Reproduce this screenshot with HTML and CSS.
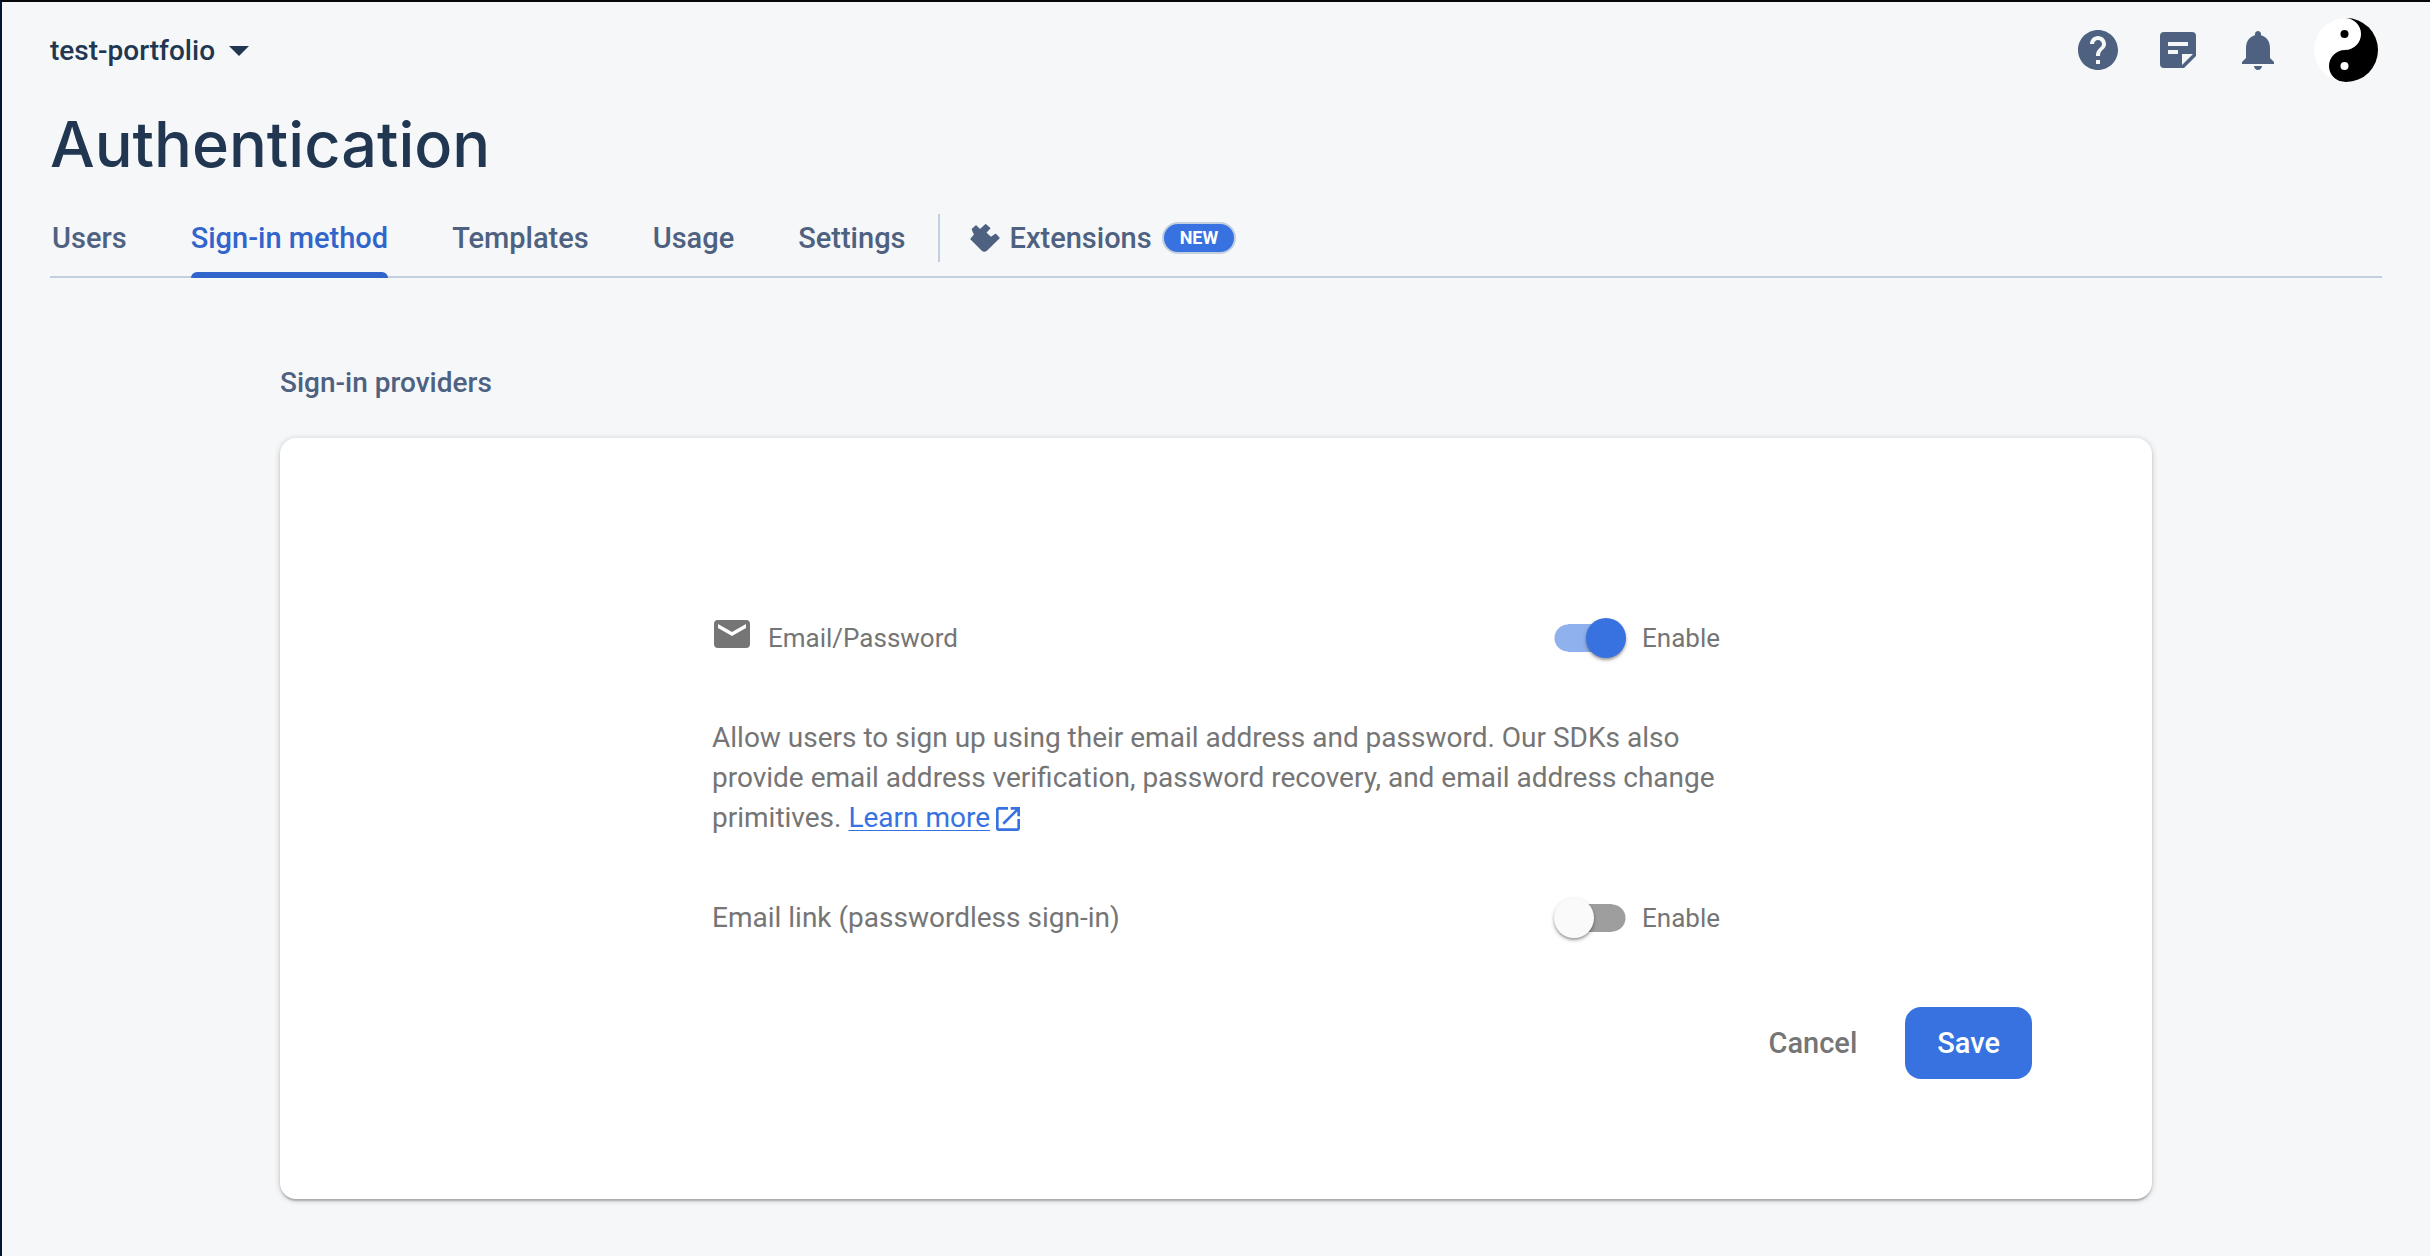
FILE: index.html
```html
<!DOCTYPE html>
<html lang="en">
<head>
<meta charset="utf-8">
<meta name="viewport" content="width=device-width, initial-scale=1">
<title>Authentication</title>
<link rel="stylesheet" href="styles.css">
</head>
<body>
<header class="header">
  <div class="topbar">
    <button type="button" class="project">test-portfolio
      <svg class="project-arrow" viewBox="0 0 20 10" aria-hidden="true"><path d="M0 0h20L10 10z"/></svg>
    </button>
    <div class="actions">
      <button type="button" class="icon-button" aria-label="Help">
        <svg class="icon" viewBox="0 0 24 24"><path d="M12 2C6.48 2 2 6.48 2 12s4.48 10 10 10 10-4.480 10-10S17.520 2 12 2zm1 17h-2v-2h2v2zm2.070-7.750l-.9.920C13.450 12.900 13 13.500 13 15h-2v-.5c0-1.100.450-2.100 1.170-2.830l1.240-1.260c.370-.36.590-.86.590-1.410 0-1.100-.9-2-2-2s-2 .9-2 2H8c0-2.210 1.790-4 4-4s4 1.790 4 4c0 .880-.36 1.680-.930 2.250z"/></svg>
      </button>
      <button type="button" class="icon-button" aria-label="Release notes">
        <svg class="icon" viewBox="0 0 24 24"><path fill-rule="evenodd" d="M5 3h14a2 2 0 0 1 2 2v10l-6 6H5a2 2 0 0 1-2-2V5a2 2 0 0 1 2-2zM7 8v2h10V8zM7 12v2h5v-2zM14 14v5.500L19.500 14z"/></svg>
      </button>
      <button type="button" class="icon-button" aria-label="Notifications">
        <svg class="icon" viewBox="0 0 24 24"><path d="M12 22c1.100 0 2-.9 2-2h-4c0 1.100.9 2 2 2zm6-6v-5c0-3.070-1.630-5.640-4.500-6.320V4c0-.830-.670-1.500-1.500-1.500s-1.500.670-1.500 1.500v.680C7.640 5.360 6 7.920 6 11v5l-2 2v1h16v-1l-2-2z"/></svg>
      </button>
      <button type="button" class="avatar" aria-label="Account">
        <svg class="avatar-art" viewBox="0 0 64 64"><circle cx="32" cy="32" r="32" fill="#fff"/><path d="M31 0A16 16 0 0 1 31 32A16 16 0 0 0 31 64H64V0z"/><circle cx="30.500" cy="16" r="4"/><circle cx="30.500" cy="48" r="4" fill="#fff"/></svg>
      </button>
    </div>
  </div>
  <h1 class="title">Authentication</h1>
  <nav class="tabs" aria-label="Authentication sections">
    <a class="tab" href="#users">Users</a>
    <a class="tab tab-active" href="#sign-in" aria-current="page">Sign-in method</a>
    <a class="tab" href="#templates">Templates</a>
    <a class="tab" href="#usage">Usage</a>
    <a class="tab" href="#settings">Settings</a>
    <a class="tab tab-extensions" href="#extensions">
      <svg class="extension-icon" viewBox="121 56 90 88" aria-hidden="true"><path d="M128 74l11-10 10 10h4l15-14 12 11-12 13 16 15 14-10 10 11-37 36q-7 6-14 0l-33-33 11-13z"/></svg>
      Extensions
      <span class="badge">NEW</span>
    </a>
  </nav>
</header>
<main class="main">
  <h2 class="section-title">Sign-in providers</h2>
  <form class="card">
    <div class="provider">
      <div class="row">
        <div class="provider-name">
          <svg class="mail-icon" viewBox="0 0 36 28" aria-hidden="true"><rect width="36" height="28" rx="4"/><path d="M4 4l14 8 14-8v4l-14 8-14-8z" fill="#fff"/></svg>
          Email/Password
        </div>
        <label class="toggle"><input class="switch" type="checkbox" checked>Enable</label>
      </div>
      <p class="description">Allow users to sign up using their email address and password. Our SDKs also provide email address verification, password recovery, and email address change primitives. <a class="link" href="#learn-more">Learn more</a><svg class="link-icon" viewBox="0 0 24 24" aria-hidden="true"><path d="M19 19H5V5h7V3H5a2 2 0 0 0-2 2v14a2 2 0 0 0 2 2h14c1.100 0 2-.9 2-2v-7h-2v7zM14 3v2h3.590l-9.830 9.830 1.410 1.410L19 6.410V10h2V3h-7z"/></svg></p>
      <div class="row">
        <div class="option-name">Email link (passwordless sign-in)</div>
        <label class="toggle"><input class="switch" type="checkbox">Enable</label>
      </div>
    </div>
    <div class="buttons">
      <button type="button" class="button">Cancel</button>
      <button type="submit" class="button button-primary">Save</button>
    </div>
  </form>
</main>
</body>
</html>
```
FILE: styles.css
```css
* {
  box-sizing: border-box;
}

body {
  margin: 0;
  min-height: 100vh;
  border-top: 2px solid #08080c;
  border-left: 2px solid #041730;
  background: #f6f7f9;
  color: #757575;
  font: 28px/40px Roboto, sans-serif;
}

button {
  border: 0;
  padding: 0;
  background: none;
  font: inherit;
  cursor: pointer;
}

svg {
  display: block;
}

.header {
  padding: 0 48px;
  color: #4e6180;
}

.topbar {
  display: flex;
  align-items: center;
  justify-content: space-between;
  height: 96px;
}

.project {
  display: flex;
  align-items: center;
  gap: 14px;
  padding-top: 2px;
  color: #213751;
  font-weight: 500;
}

.project-arrow {
  width: 20px;
  height: 10px;
  fill: #213751;
}

.actions {
  display: flex;
  align-items: center;
  gap: 32px;
  padding-right: 4px;
}

.icon {
  width: 48px;
  height: 48px;
  fill: #4e6180;
}

.avatar-art {
  width: 64px;
  height: 64px;
  border-radius: 50%;
}

.title {
  margin: 0 0 8px;
  color: #213751;
  font: 500 63px/92px Inter, sans-serif;
}

.tabs {
  display: flex;
  gap: 64px;
  height: 80px;
  padding-left: 2px;
  border-bottom: 2px solid #c3cfdf;
}

.tab {
  display: flex;
  align-items: center;
  margin-bottom: -2px;
  padding-top: 2px;
  border-bottom: 2px solid transparent;
  color: #4e6180;
  font-size: 29px;
  font-weight: 500;
  text-decoration: none;
}

.tab-active {
  position: relative;
  color: #3265cb;
}

.tab-active::after {
  content: "";
  position: absolute;
  right: 0;
  bottom: -2px;
  left: 0;
  height: 6px;
  border-radius: 6px 6px 0 0;
  background: #3265cb;
}

.tab-extensions {
  gap: 10px;
  margin-left: -32px;
}

.tab-extensions::before {
  content: "";
  width: 2px;
  height: 48px;
  margin-right: 20px;
  background: #c3cfdf;
}

.extension-icon {
  width: 30px;
  height: 30px;
  fill: #4e6180;
  stroke: #4e6180;
  stroke-width: 4;
  stroke-linejoin: round;
}

.badge {
  padding: 0 16px;
  border: 2px solid #c3cfdf;
  border-radius: 16px;
  background: #3872e0;
  color: #fff;
  font-size: 18px;
  font-weight: 700;
  line-height: 28px;
}

.main {
  max-width: 1872px;
  margin: 0 auto;
  padding: 85px 0 56px;
}

.section-title {
  margin: 0 0 35px;
  color: #4e6180;
  font-size: 28px;
  font-weight: 500;
}

.card {
  padding: 180px 120px 120px;
  border-radius: 16px;
  background: #fff;
  box-shadow: 0 4px 2px -2px rgba(0, 0, 0, .12), 0 2px 2px rgba(0, 0, 0, .12), 0 1px 6px rgba(0, 0, 0, .2);
}

.provider {
  display: grid;
  gap: 60px;
  max-width: 1008px;
  margin: 0 auto 69px;
}

.row {
  display: flex;
  align-items: center;
  justify-content: space-between;
}

.provider-name {
  display: flex;
  gap: 18px;
  padding-left: 2px;
  font-size: 26px;
}

.mail-icon {
  width: 36px;
  height: 28px;
  margin-top: 2px;
  fill: #757575;
}

.toggle {
  display: flex;
  align-items: center;
  gap: 16px;
  font-size: 26px;
}

.switch {
  appearance: none;
  display: flex;
  align-items: center;
  width: 72px;
  height: 40px;
  margin: 0;
  background: linear-gradient(#9e9e9e, #9e9e9e) center / 44px 28px no-repeat,
    radial-gradient(circle at 58px 20px, #9e9e9e 13px, transparent 14px);
}

.switch::before {
  content: "";
  width: 40px;
  height: 40px;
  border-radius: 50%;
  background: #fafafa;
  box-shadow: 0 2px 2px rgba(0, 0, 0, .2), 0 2px 4px rgba(0, 0, 0, .24);
}

.switch:checked {
  justify-content: flex-end;
  background: linear-gradient(#8fb1ed, #8fb1ed) center / 44px 28px no-repeat,
    radial-gradient(circle at 14px 20px, #8fb1ed 13px, transparent 14px);
}

.switch:checked::before {
  background: #3872e0;
}

.description {
  margin: 0;
}

.link {
  color: #3872e0;
  text-decoration-thickness: 1px;
  text-underline-offset: 3px;
}

.link-icon {
  display: inline-block;
  width: 32px;
  height: 32px;
  margin-left: 2px;
  vertical-align: -8px;
  fill: #3872e0;
}

.buttons {
  display: flex;
  justify-content: flex-end;
  gap: 16px;
}

.button {
  height: 72px;
  padding: 0 32px;
  border-radius: 16px;
  color: #757575;
  font-size: 29px;
  font-weight: 500;
}

.button-primary {
  background: #3872e0;
  color: #fff;
}
```
